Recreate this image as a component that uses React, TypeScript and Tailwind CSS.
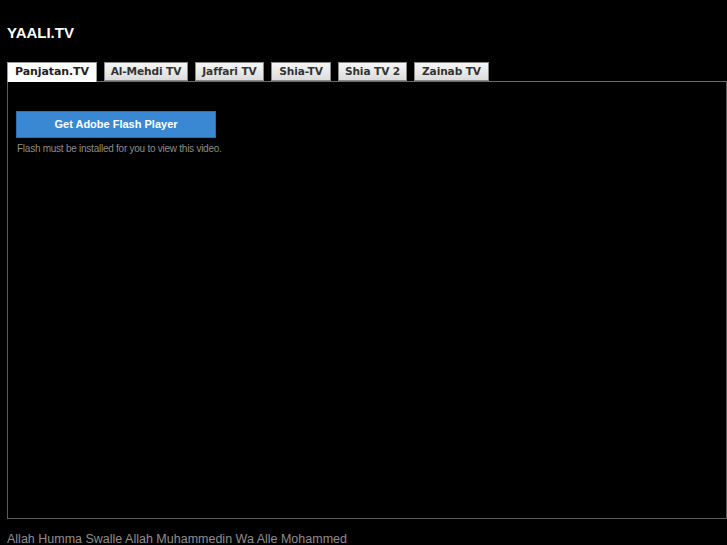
import React from "react";

const tabs: [string, string][] = [
  ["Panjatan.TV", "w-[90px]"],
  ["Al-Mehdi TV", "w-[84px]"],
  ["Jaffari TV", "w-[69px]"],
  ["Shia-TV", "w-[60px]"],
  ["Shia TV 2", "w-[69px]"],
  ["Zainab TV", "w-[75px]"],
];

export default function App() {
  return (
    <div className="bg-black w-full h-[545px] overflow-hidden pl-[7px] font-['Liberation_Sans',Arial,sans-serif]">
      <div className="pt-[24px] h-[62px]">
        <h1 className="text-white font-bold text-[15px] leading-[18px]">YAALI.TV</h1>
      </div>
      <div className="flex gap-[7px] relative z-10 h-[19px] items-start">
        {tabs.map(([t, w], i) => (
          <div
            key={t}
            className={
              (i === 0
                ? "h-[20px] border border-[#9a9a9a] border-b-0 bg-white text-[#222] leading-[18px] text-[11px] "
                : "h-[19px] border border-[#8a8a8a] bg-gradient-to-b from-[#f6f6f6] to-[#dcdcdc] text-[#333] leading-[17px] text-[10.6px] ") +
              w +
              " text-center whitespace-nowrap font-['DejaVu_Sans',sans-serif] font-bold tracking-[-0.1px]"
            }
          >
            {t}
          </div>
        ))}
      </div>
      <div className="w-[720px] h-[438px] border border-[#5c5c5c] border-t-[#6a6a6a] pt-[29px] pl-[8px]">
        <div className="w-[200px] h-[27px] bg-[#3a87d3] border border-[#2f70b5] text-white text-[11px] font-bold flex items-center justify-center">
          Get Adobe Flash Player
        </div>
        <div className="mt-[5px] text-[#8c8c8c] text-[10px] leading-[12px] tracking-[-0.25px] pl-[1px]">
          Flash must be installed for you to view this video.
        </div>
      </div>
      <div className="mt-[13px] text-[#8e8e8e] text-[12.5px] leading-[14px]">
        Allah Humma Swalle Allah Muhammedin Wa Alle Mohammed
      </div>
    </div>
  );
}
